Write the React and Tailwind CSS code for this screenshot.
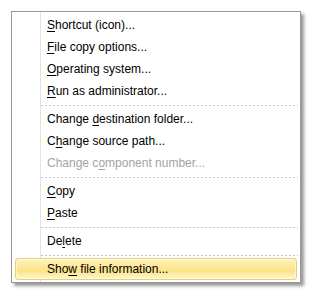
import React from "react";

const items = [
  { label: "Shortcut (icon)...", key: 0 },
  { label: "File copy options...", key: 0 },
  { label: "Operating system...", key: 0 },
  { label: "Run as administrator...", key: 0 },
  "sep",
  { label: "Change destination folder...", key: 7 },
  { label: "Change source path...", key: 1 },
  { label: "Change component number...", key: 8, disabled: true },
  "sep",
  { label: "Copy", key: 0 },
  { label: "Paste", key: 0 },
  "sep",
  { label: "Delete", key: 2 },
  "sep",
  { label: "Show file information...", key: 3, active: true },
];

function Label({ text, at }) {
  return (
    <span>
      {text.slice(0, at)}
      <span className="underline underline-offset-2">{text[at]}</span>
      {text.slice(at + 1)}
    </span>
  );
}

export default function App() {
  return (
    <div className="w-[317px] h-[296px] bg-white pt-[11px] pl-[11px]">
      <div
        className="relative w-[290px] h-[272px] border border-[#979797] bg-white py-[2px] shadow-[3px_3px_3px_rgba(0,0,0,0.4)] text-[12px] text-black"
        style={{ fontFamily: '"Liberation Sans", Arial, sans-serif' }}
      >
        <div className="absolute left-[28px] top-0 bottom-0 w-px bg-[#e3e3e3]" />
        {items.map((it, i) =>
          it === "sep" ? (
            <div key={i} className="h-[6px] flex items-center pl-[29px] pr-[2px]">
              <div className="h-px w-full bg-[repeating-linear-gradient(to_right,#c5c5c5_0_2px,transparent_2px_4px)]" />
            </div>
          ) : it.active ? (
            <div key={i} className="relative h-[22px] mx-[3px] flex items-center pl-[31px] rounded-[3px] border border-[#ecd06c] bg-[linear-gradient(to_bottom,#fef3c4_0%,#fde68f_45%,#fde38a_60%,#fef6d2_100%)] shadow-[inset_0_0_0_1px_rgba(255,255,255,0.5)]">
              <Label text={it.label} at={it.key} />
            </div>
          ) : (
            <div
              key={i}
              className={`relative h-[22px] flex items-center pl-[35px] ${it.disabled ? "text-[#a3a3a3]" : ""}`}
            >
              <Label text={it.label} at={it.key} />
            </div>
          )
        )}
      </div>
    </div>
  );
}
